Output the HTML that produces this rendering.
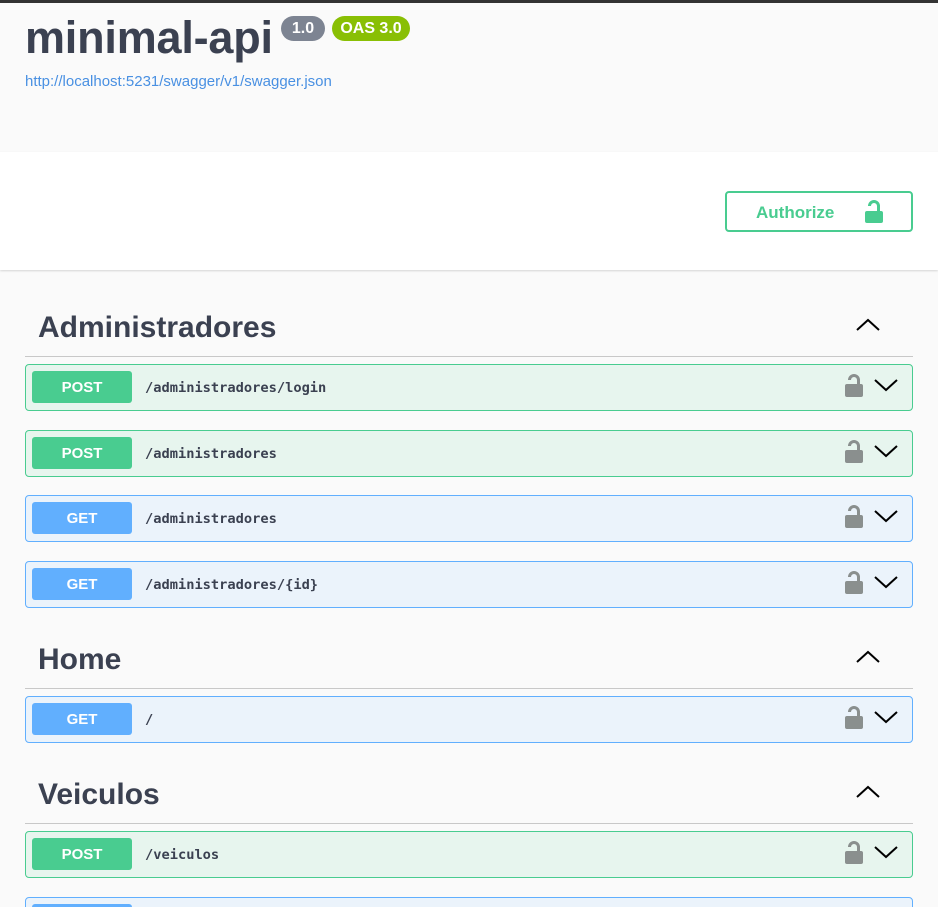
<!DOCTYPE html>
<html><head><meta charset="utf-8"><style>
*{box-sizing:border-box;margin:0;padding:0}
html,body{width:938px;height:907px;overflow:hidden}
body{background:#fafafa;font-family:"Liberation Sans",Arial,sans-serif;position:relative}
.top{position:absolute;left:0;top:0;width:938px;height:3px;background:#333}
h1{position:absolute;left:25px;top:12px;font-size:45px;font-weight:bold;color:#3b4151;letter-spacing:-0.2px}
.badge{position:absolute;top:16px;height:25px;border-radius:13px;color:#fff;font-weight:bold;font-size:16px;line-height:25px;text-align:center}
.url{position:absolute;left:25px;top:73px;font-size:15px;color:#4990e2}
.scheme{position:absolute;left:0;top:152px;width:938px;height:118px;background:#fff;box-shadow:0 1px 2px rgba(0,0,0,.15)}
.auth{position:absolute;left:725px;top:39px;width:188px;height:41px;border:2px solid #49cc90;border-radius:4px;color:#49cc90;font-weight:bold;font-size:17px}
.auth span{position:absolute;left:29px;top:10px}
.auth svg{position:absolute;left:137px;top:7px}
.tag{position:absolute;left:25px;width:888px;height:33px;border-bottom:1px solid #c8c8c8}
.tag b{position:absolute;left:13px;top:-13px;font-size:30px;color:#3b4151}
.tag svg{position:absolute;left:831px;top:-6px}
.op{position:absolute;left:25px;width:888px;height:47px;border:1px solid;border-radius:4px}
.post{background:#e7f5ee;border-color:#49cc90}
.get{background:#ebf3fb;border-color:#61affe}
.m{position:absolute;left:6px;top:6px;width:100px;height:32px;border-radius:3px;color:#fff;font-weight:bold;font-size:15px;line-height:33px;text-align:center}
.post .m{background:#49cc90}.get .m{background:#61affe}
.p{position:absolute;left:119px;top:15px;font-family:"DejaVu Sans Mono","Liberation Mono",monospace;font-weight:bold;font-size:13.7px;color:#3b4151}
.lk{position:absolute;left:819px;top:8px}
.ch{position:absolute;left:848px;top:13px}
</style></head><body>
<div class="top"></div>
<h1>minimal-api</h1>
<div class="badge" style="left:281px;width:44px;background:#7d8492">1.0</div>
<div class="badge" style="left:332px;width:78px;background:#89bf04">OAS 3.0</div>
<div class="url">http://localhost:5231/swagger/v1/swagger.json</div>
<div class="scheme"><div class="auth"><span>Authorize</span><svg width="20" height="24" viewBox="0 0 20 24"><path d="M5.5 6a4.5 4.5 0 0 1 9 0V12" fill="none" stroke="#49cc90" stroke-width="3"/><rect x="1" y="11" width="18" height="12" rx="2" fill="#49cc90"/></svg></div></div>

<div class="tag" style="top:324px"><b>Administradores</b><svg width="24" height="14" viewBox="0 0 24 14"><path d="M1 12 12 2l11 10" fill="none" stroke="#000" stroke-width="2"/></svg></div>
<div class="tag" style="top:656px"><b>Home</b><svg width="24" height="14" viewBox="0 0 24 14"><path d="M1 12 12 2l11 10" fill="none" stroke="#000" stroke-width="2"/></svg></div>
<div class="tag" style="top:791px"><b>Veiculos</b><svg width="24" height="14" viewBox="0 0 24 14"><path d="M1 12 12 2l11 10" fill="none" stroke="#000" stroke-width="2"/></svg></div>

<div class="op post" style="top:364px"><div class="m">POST</div><div class="p">/administradores/login</div><svg class="lk" width="18" height="25" viewBox="0 0 18 25"><path d="M4.5 7a4.5 4.5 0 0 1 9 0V13" fill="none" stroke="#8a8f8e" stroke-width="3"/><rect x="0" y="11" width="18" height="13" rx="2" fill="#8a8f8e"/></svg><svg class="ch" width="24" height="14" viewBox="0 0 24 14"><path d="M1 2l11 10L23 2" fill="none" stroke="#000" stroke-width="2"/></svg></div>
<div class="op post" style="top:430px"><div class="m">POST</div><div class="p">/administradores</div><svg class="lk" width="18" height="25" viewBox="0 0 18 25"><path d="M4.5 7a4.5 4.5 0 0 1 9 0V13" fill="none" stroke="#8a8f8e" stroke-width="3"/><rect x="0" y="11" width="18" height="13" rx="2" fill="#8a8f8e"/></svg><svg class="ch" width="24" height="14" viewBox="0 0 24 14"><path d="M1 2l11 10L23 2" fill="none" stroke="#000" stroke-width="2"/></svg></div>
<div class="op get" style="top:495px"><div class="m">GET</div><div class="p">/administradores</div><svg class="lk" width="18" height="25" viewBox="0 0 18 25"><path d="M4.5 7a4.5 4.5 0 0 1 9 0V13" fill="none" stroke="#8a8f8e" stroke-width="3"/><rect x="0" y="11" width="18" height="13" rx="2" fill="#8a8f8e"/></svg><svg class="ch" width="24" height="14" viewBox="0 0 24 14"><path d="M1 2l11 10L23 2" fill="none" stroke="#000" stroke-width="2"/></svg></div>
<div class="op get" style="top:561px"><div class="m">GET</div><div class="p">/administradores/{id}</div><svg class="lk" width="18" height="25" viewBox="0 0 18 25"><path d="M4.5 7a4.5 4.5 0 0 1 9 0V13" fill="none" stroke="#8a8f8e" stroke-width="3"/><rect x="0" y="11" width="18" height="13" rx="2" fill="#8a8f8e"/></svg><svg class="ch" width="24" height="14" viewBox="0 0 24 14"><path d="M1 2l11 10L23 2" fill="none" stroke="#000" stroke-width="2"/></svg></div>
<div class="op get" style="top:696px"><div class="m">GET</div><div class="p">/</div><svg class="lk" width="18" height="25" viewBox="0 0 18 25"><path d="M4.5 7a4.5 4.5 0 0 1 9 0V13" fill="none" stroke="#8a8f8e" stroke-width="3"/><rect x="0" y="11" width="18" height="13" rx="2" fill="#8a8f8e"/></svg><svg class="ch" width="24" height="14" viewBox="0 0 24 14"><path d="M1 2l11 10L23 2" fill="none" stroke="#000" stroke-width="2"/></svg></div>
<div class="op post" style="top:831px"><div class="m">POST</div><div class="p">/veiculos</div><svg class="lk" width="18" height="25" viewBox="0 0 18 25"><path d="M4.5 7a4.5 4.5 0 0 1 9 0V13" fill="none" stroke="#8a8f8e" stroke-width="3"/><rect x="0" y="11" width="18" height="13" rx="2" fill="#8a8f8e"/></svg><svg class="ch" width="24" height="14" viewBox="0 0 24 14"><path d="M1 2l11 10L23 2" fill="none" stroke="#000" stroke-width="2"/></svg></div>
<div class="op get" style="top:897px"><div class="m">GET</div><div class="p">/veiculos</div></div>
</body></html>
